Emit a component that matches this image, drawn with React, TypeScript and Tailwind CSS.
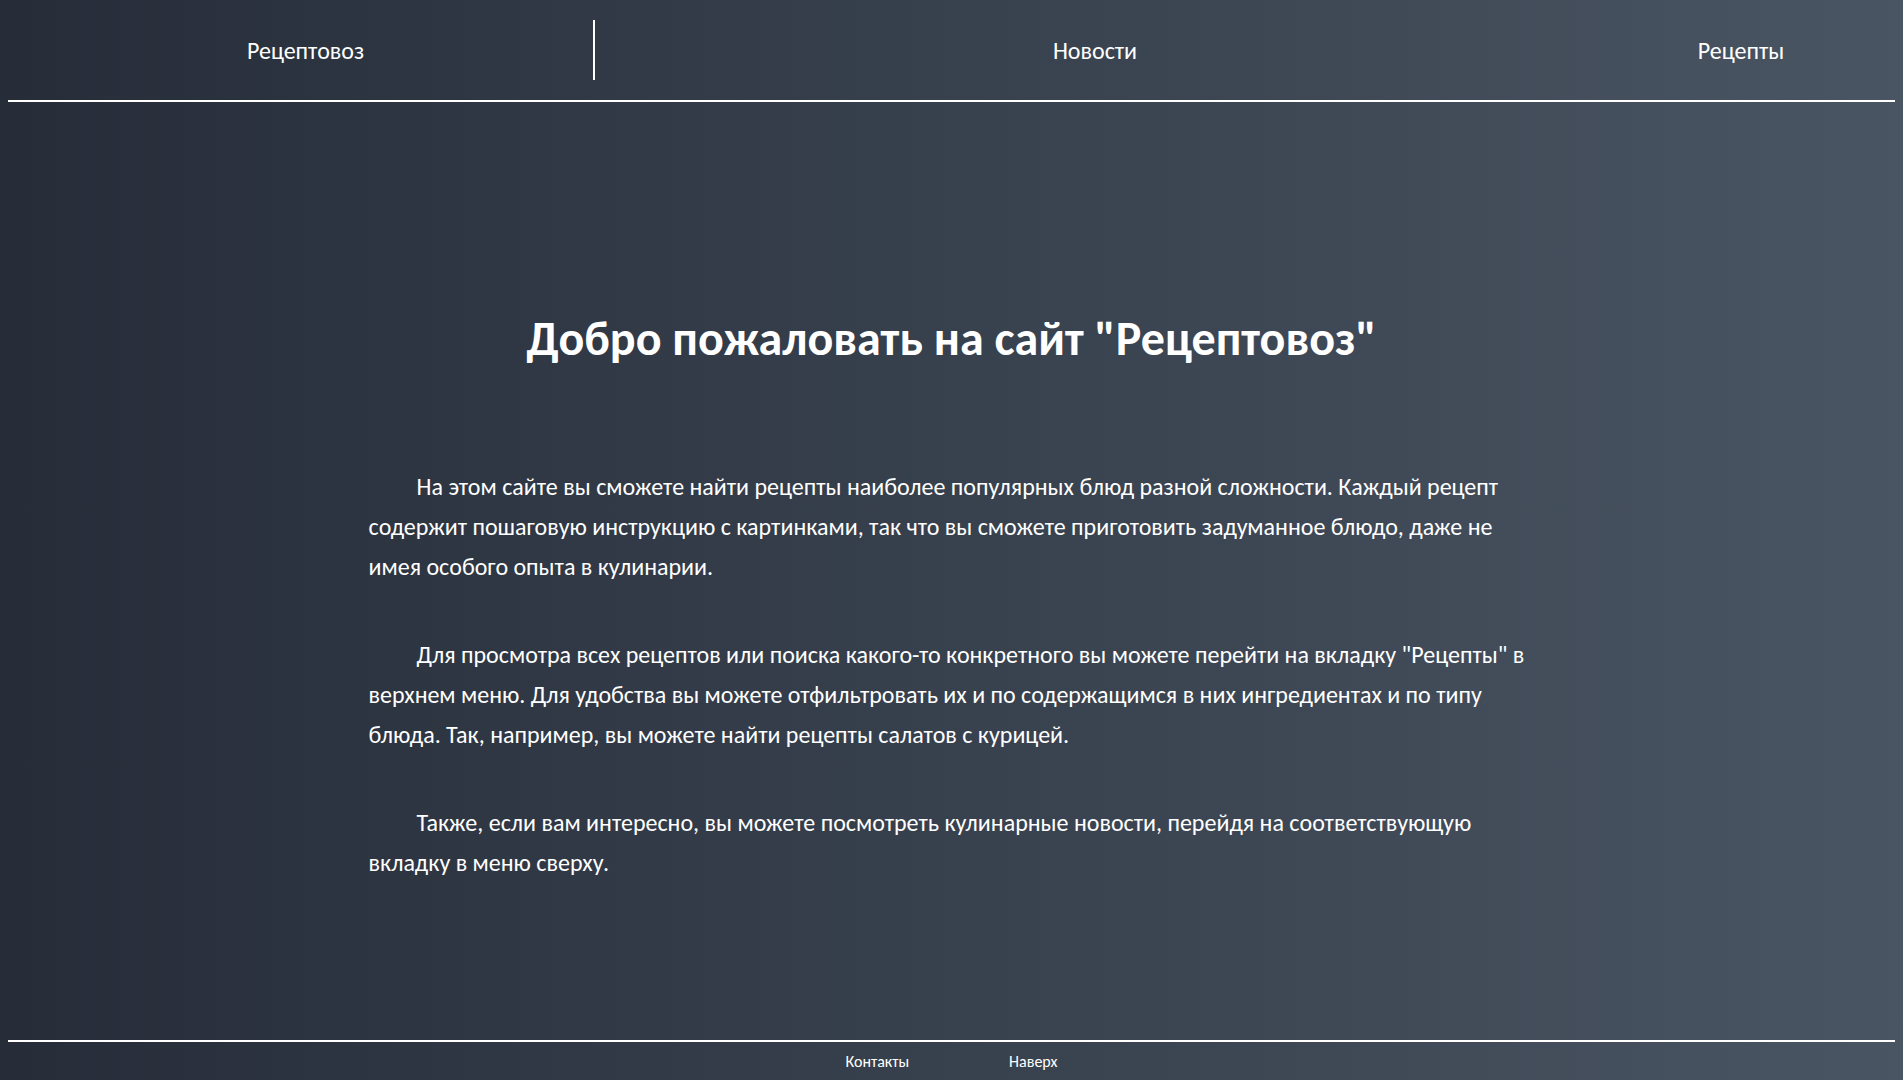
const font = "font-['Carlito','Lato','Noto_Sans',sans-serif]";
const para = "indent-12 text-[24px] leading-[40px] text-white";
const item = "flex justify-center pt-[2px]";

export default function App() {
  return (
    <div
      className={`flex min-h-screen flex-col bg-gradient-to-r from-[#262d39] to-[#4a5563] ${font}`}
    >
      <header className="pt-[20px]">
        <nav className="flex h-[60px] items-center text-[24px] text-white">
          <div className={`${item} w-[593px] pl-[18px]`}>
            <a href="#">Рецептовоз</a>
          </div>
          <div className="h-full w-[2px] bg-white" />
          <div className={`${item} w-[1000px]`}>
            <a href="#">Новости</a>
          </div>
          <div className={`${item} w-[292px]`}>
            <a href="#">Рецепты</a>
          </div>
        </nav>
        <div className="mx-[8px] mt-[20px] h-[2px] bg-white" />
      </header>

      <main className="flex flex-col items-center">
        <h1 className="mt-[211px] text-[48px] font-bold leading-[52px] text-white">
          Добро пожаловать на сайт "Рецептовоз"
        </h1>
        <div className="mt-[102px] flex w-[1166px] flex-col gap-[48px]">
          <p className={para}>
            На этом сайте вы сможете найти рецепты наиболее популярных блюд разной сложности. Каждый рецепт
            <br />
            содержит пошаговую инструкцию с картинками, так что вы сможете приготовить задуманное блюдо, даже не
            <br />
            имея особого опыта в кулинарии.
          </p>
          <p className={para}>
            Для просмотра всех рецептов или поиска какого-то конкретного вы можете перейти на вкладку "Рецепты" в
            <br />
            верхнем меню. Для удобства вы можете отфильтровать их и по содержащимся в них ингредиентах и по типу
            <br />
            блюда. Так, например, вы можете найти рецепты салатов с курицей.
          </p>
          <p className={para}>
            Также, если вам интересно, вы можете посмотреть кулинарные новости, перейдя на соответствующую
            <br />
            вкладку в меню сверху.
          </p>
        </div>
      </main>

      <footer className="mt-auto">
        <div className="mx-[8px] h-[2px] bg-white" />
        <div className="mt-[10px] flex h-[20px] items-center justify-center gap-[100px] text-[16px] leading-[20px] text-white">
          <a href="#">Контакты</a>
          <a href="#">Наверх</a>
        </div>
        <div className="h-[8px]" />
      </footer>
    </div>
  );
}
